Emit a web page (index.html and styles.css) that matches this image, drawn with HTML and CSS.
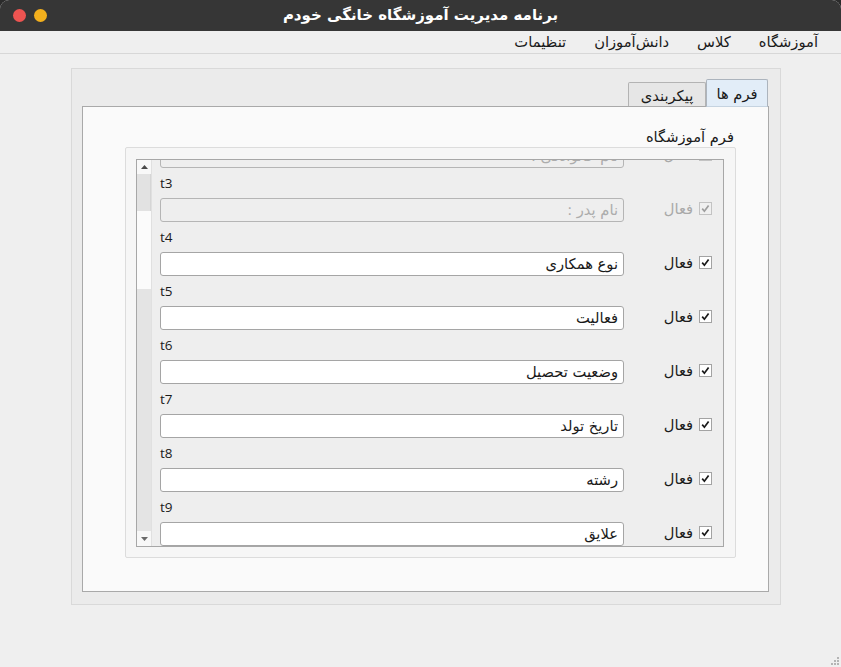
FILE: index.html
```html
<!DOCTYPE html>
<html lang="fa">
<head>
<meta charset="utf-8">
<title>برنامه مدیریت آموزشگاه خانگی خودم</title>
<link rel="stylesheet" href="styles.css">
</head>
<body>
<div class="window">
  <header class="titlebar">
    <div class="controls">
      <span class="dot dot-close"></span>
      <span class="dot dot-min"></span>
    </div>
    <div class="title" dir="rtl">برنامه مدیریت آموزشگاه خانگی خودم</div>
    <div class="controls-spacer"></div>
  </header>

  <nav class="menubar" dir="rtl">
    <span class="menu-item">آموزشگاه</span>
    <span class="menu-item">کلاس</span>
    <span class="menu-item">دانش‌آموزان</span>
    <span class="menu-item">تنظیمات</span>
  </nav>

  <main class="central">
    <section class="outer-group">
      <div class="tabbar" dir="rtl">
        <div class="tab tab-active">فرم ها</div>
        <div class="tab tab-config">پیکربندی</div>
      </div>
      <div class="tab-pane">
        <div class="group-title" dir="rtl">فرم آموزشگاه</div>
        <div class="group-box">
          <div class="scroll-frame">
            <div class="scrollbar">
              <div class="sb-btn sb-up"><svg width="7" height="4" viewBox="0 0 7 4"><path d="M0 4 L3.5 0 L7 4 Z" fill="#4a4a4a"/></svg></div>
              <div class="sb-track">
                <div class="sb-before"></div>
                <div class="sb-handle"></div>
                <div class="sb-after"></div>
              </div>
              <div class="sb-btn sb-down"><svg width="7" height="4" viewBox="0 0 7 4"><path d="M0 0 L3.5 4 L7 0 Z" fill="#6a6a6a"/></svg></div>
            </div>
            <div class="viewport">
              <div class="rows">
                <div class="row row-disabled">
                  <div class="field">
                    <div class="field-label">t2</div>
                    <div class="input" dir="rtl"><span class="placeholder">نام خانوادگی :</span></div>
                  </div>
                  <div class="spacer"></div>
                  <span class="active-label">فعال</span>
                  <span class="checkbox"><svg width="11" height="11" viewBox="0 0 11 11"><path d="M2.2 5.6 L4.4 8.2 L8.6 2.4" fill="none" stroke="currentColor" stroke-width="1.7"/></svg></span>
                </div>
                <div class="row row-disabled">
                  <div class="field">
                    <div class="field-label">t3</div>
                    <div class="input" dir="rtl"><span class="placeholder">نام پدر :</span></div>
                  </div>
                  <div class="spacer"></div>
                  <span class="active-label">فعال</span>
                  <span class="checkbox"><svg width="11" height="11" viewBox="0 0 11 11"><path d="M2.2 5.6 L4.4 8.2 L8.6 2.4" fill="none" stroke="currentColor" stroke-width="1.7"/></svg></span>
                </div>
                <div class="row">
                  <div class="field">
                    <div class="field-label">t4</div>
                    <div class="input" dir="rtl">نوع همکاری</div>
                  </div>
                  <div class="spacer"></div>
                  <span class="active-label">فعال</span>
                  <span class="checkbox"><svg width="11" height="11" viewBox="0 0 11 11"><path d="M2.2 5.6 L4.4 8.2 L8.6 2.4" fill="none" stroke="currentColor" stroke-width="1.7"/></svg></span>
                </div>
                <div class="row">
                  <div class="field">
                    <div class="field-label">t5</div>
                    <div class="input" dir="rtl">فعالیت</div>
                  </div>
                  <div class="spacer"></div>
                  <span class="active-label">فعال</span>
                  <span class="checkbox"><svg width="11" height="11" viewBox="0 0 11 11"><path d="M2.2 5.6 L4.4 8.2 L8.6 2.4" fill="none" stroke="currentColor" stroke-width="1.7"/></svg></span>
                </div>
                <div class="row">
                  <div class="field">
                    <div class="field-label">t6</div>
                    <div class="input" dir="rtl">وضعیت تحصیل</div>
                  </div>
                  <div class="spacer"></div>
                  <span class="active-label">فعال</span>
                  <span class="checkbox"><svg width="11" height="11" viewBox="0 0 11 11"><path d="M2.2 5.6 L4.4 8.2 L8.6 2.4" fill="none" stroke="currentColor" stroke-width="1.7"/></svg></span>
                </div>
                <div class="row">
                  <div class="field">
                    <div class="field-label">t7</div>
                    <div class="input" dir="rtl">تاریخ تولد</div>
                  </div>
                  <div class="spacer"></div>
                  <span class="active-label">فعال</span>
                  <span class="checkbox"><svg width="11" height="11" viewBox="0 0 11 11"><path d="M2.2 5.6 L4.4 8.2 L8.6 2.4" fill="none" stroke="currentColor" stroke-width="1.7"/></svg></span>
                </div>
                <div class="row">
                  <div class="field">
                    <div class="field-label">t8</div>
                    <div class="input" dir="rtl">رشته</div>
                  </div>
                  <div class="spacer"></div>
                  <span class="active-label">فعال</span>
                  <span class="checkbox"><svg width="11" height="11" viewBox="0 0 11 11"><path d="M2.2 5.6 L4.4 8.2 L8.6 2.4" fill="none" stroke="currentColor" stroke-width="1.7"/></svg></span>
                </div>
                <div class="row">
                  <div class="field">
                    <div class="field-label">t9</div>
                    <div class="input" dir="rtl">علایق</div>
                  </div>
                  <div class="spacer"></div>
                  <span class="active-label">فعال</span>
                  <span class="checkbox"><svg width="11" height="11" viewBox="0 0 11 11"><path d="M2.2 5.6 L4.4 8.2 L8.6 2.4" fill="none" stroke="currentColor" stroke-width="1.7"/></svg></span>
                </div>
              </div>
            </div>
          </div>
        </div>
      </div>
    </section>
  </main>

  <svg class="size-grip" width="10" height="10" viewBox="0 0 10 10">
    <rect x="7" y="0" width="2" height="2" fill="#b4b4b4"/>
    <rect x="4" y="3" width="2" height="2" fill="#b4b4b4"/>
    <rect x="7" y="3" width="2" height="2" fill="#b4b4b4"/>
    <rect x="1" y="6" width="2" height="2" fill="#b4b4b4"/>
    <rect x="4" y="6" width="2" height="2" fill="#b4b4b4"/>
    <rect x="7" y="6" width="2" height="2" fill="#b4b4b4"/>
  </svg>
</div>
</body>
</html>
```

FILE: styles.css
```css
* { box-sizing: border-box; }

html, body {
  margin: 0;
  padding: 0;
  background: #2b2b2b;
}

body {
  width: 841px;
  height: 667px;
  overflow: hidden;
  font-family: "DejaVu Sans", sans-serif;
  font-size: 14.7px;
  color: #1a1a1a;
}

.window {
  position: relative;
  width: 841px;
  height: 667px;
  background: #efefef;
  border-radius: 9px 9px 0 0;
  overflow: hidden;
}

/* ---------- title bar ---------- */
.titlebar {
  height: 31px;
  background: #363636;
  display: grid;
  grid-template-columns: 1fr auto 1fr;
  align-items: center;
}

.controls {
  display: flex;
  gap: 8px;
  padding-left: 13px;
}

.dot {
  width: 13px;
  height: 13px;
  border-radius: 50%;
  display: block;
}

.dot-close { background: #ed5451; }
.dot-min { background: #f3b01d; }

.title {
  color: #ffffff;
  font-weight: bold;
  font-size: 15px;
  line-height: 31px;
}

/* ---------- menu bar ---------- */
.menubar {
  height: 23px;
  border-bottom: 1px solid #d7d7d7;
  display: flex;
  align-items: center;
  padding-right: 23px;
  gap: 28px;
}

.menu-item {
  line-height: 20px;
}

/* ---------- central ---------- */
.central {
  padding: 14px 0 0 71px;
}

.outer-group {
  width: 710px;
  height: 537px;
  border: 1px solid #d9d9d9;
  background: #ebebeb;
  padding: 10px 11px 12px 10px;
  display: flex;
  flex-direction: column;
}

.tabbar {
  height: 27px;
  display: flex;
  align-items: flex-end;
  padding-right: 1px;
}

.tab {
  height: 24px;
  border: 1px solid #b3b3b3;
  border-bottom: none;
  border-radius: 2px 2px 0 0;
  background: #e6e6e6;
  display: flex;
  align-items: center;
  justify-content: center;
  white-space: nowrap;
  color: #1a1a1a;
}

.tab-config {
  width: 78px;
  padding-top: 2px;
}

.tab-active {
  width: 62px;
  height: 28px;
  background: #e2edf8;
  border-color: #acb4bd;
  border-bottom: 1px solid #c5d3e0;
  position: relative;
  z-index: 1;
  margin-bottom: -1px;
}

.tab-pane {
  width: 687px;
  height: 486px;
  border: 1px solid #a9a9a9;
  background: #fafafa;
  padding: 0 32px 0 42px;
}

.group-title {
  padding-top: 20px;
  padding-right: 2px;
  line-height: 20px;
  height: 40px;
}

.group-box {
  width: 611px;
  height: 411px;
  border: 1px solid #dcdcdc;
  background: #f6f6f6;
  border-radius: 2px;
  padding: 11px 11px 10px 10px;
}

.scroll-frame {
  width: 588px;
  height: 388px;
  border: 1px solid #a7a7a7;
  display: flex;
  background: #eeeeee;
}

/* ---------- scrollbar ---------- */
.scrollbar {
  width: 15px;
  display: flex;
  flex-direction: column;
  background: #e3e3e3;
  border-right: 1px solid #e0e0e0;
}

.sb-btn {
  background: #f8f8f8;
  display: flex;
  align-items: center;
  justify-content: center;
}

.sb-up { height: 14px; }
.sb-down { height: 15px; }

.sb-track {
  flex: 1;
  display: flex;
  flex-direction: column;
}

.sb-before {
  height: 37px;
  background: #e2e2e2;
  border-right: 1px solid #d6d6d6;
}

.sb-handle {
  height: 78px;
  background: #fbfbfb;
}

.sb-after {
  flex: 1;
  background: #e4e4e4;
}

/* ---------- rows ---------- */
.viewport {
  flex: 1;
  overflow: hidden;
  background: #eeeeee;
}

.rows {
  margin-top: -46px;
  padding: 0 11px 0 8px;
}

.row {
  height: 54px;
  display: flex;
  align-items: flex-end;
}

.field {
  width: 464px;
  display: flex;
  flex-direction: column;
}

.field-label {
  height: 30px;
  line-height: 31px;
  font-family: "Open Sans", "DejaVu Sans", sans-serif;
  font-size: 13.5px;
  color: #1a1a1a;
}

.input {
  height: 24px;
  border: 1px solid #a5a5a5;
  border-radius: 3px;
  background: #ffffff;
  padding: 0 5px;
  line-height: 22px;
  text-align: right;
  white-space: nowrap;
  overflow: hidden;
}

.spacer { flex: 1; }

.active-label {
  line-height: 20px;
  margin-bottom: 3px;
  margin-right: 6px;
}

.checkbox {
  width: 13px;
  height: 13px;
  border: 1px solid #a3a3a3;
  background: #ffffff;
  margin-bottom: 7px;
  display: flex;
  align-items: center;
  justify-content: center;
  color: #1a1a1a;
}

.row-disabled .input {
  background: #eeeeee;
  border-color: #b5b5b5;
}

.row-disabled .placeholder {
  color: #acacac;
}

.row-disabled .active-label {
  color: #a9a9a9;
}

.row-disabled .checkbox {
  background: #f0f0f0;
  border-color: #c3c3c3;
  color: #9e9e9e;
}

.size-grip {
  position: absolute;
  right: 1px;
  bottom: 0;
}
```
